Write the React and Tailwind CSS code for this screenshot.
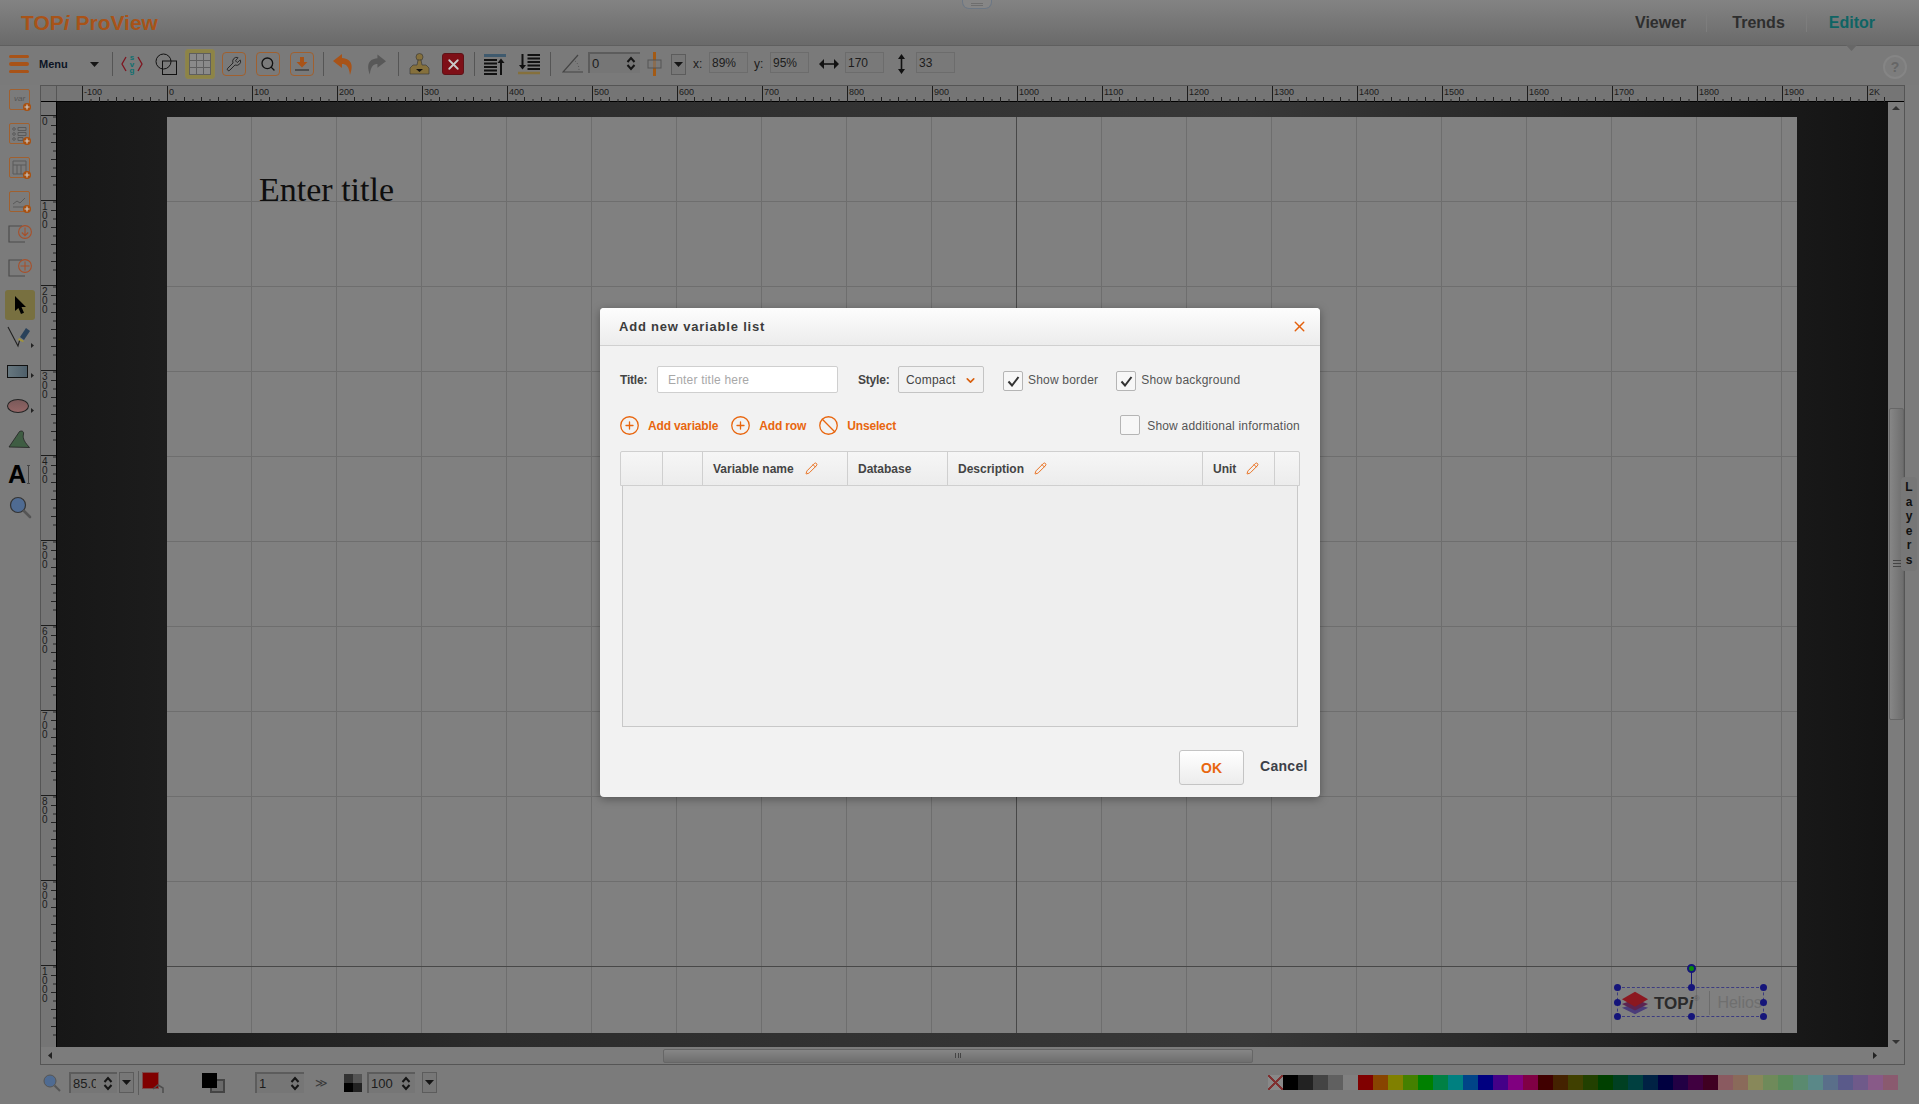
import { Ban, ChevronDown, CirclePlus, Pencil, Search, Wrench, X } from "lucide-react";

const SWATCHES = [
  "#000000", "#222222", "#444444", "#606060", "#808080",
  "#800000", "#884400", "#808000", "#448000", "#008000", "#008044", "#008080", "#004488", "#000080", "#440088", "#800080", "#800044",
  "#400000", "#442200", "#404000", "#224000", "#004000", "#004022", "#004040", "#002244", "#000040", "#220044", "#400040", "#400022",
  "#8a5a60", "#8a6a5a", "#88885a", "#6f8a5a", "#5a8a5a", "#5a8a6f", "#5a8888", "#5a6f8a", "#5a5a8a", "#6f5a8a", "#885a88", "#8a5a6f",
];

const HEAD_COLS = [
  { w: "w-[42px]" },
  { w: "w-[40px]" },
  { w: "w-[145px]", label: "Variable name", pen: "ml-[11px]" },
  { w: "w-[100px]", label: "Database" },
  { w: "w-[255px]", label: "Description", pen: "ml-[10px]" },
  { w: "w-[72px]", label: "Unit", pen: "ml-[10px]" },
];

function Divider({ className }) {
  return <div className={`h-[24px] w-px bg-[#555] ${className}`} />;
}

function Spinner({ value, className }) {
  return (
    <div className={`flex h-[21px] items-center justify-between border-l-2 border-t-2 border-[#5c5c5c] bg-[#767676] pl-[2px] pr-[4px] text-[13px] text-[#1c1c1c] ${className}`}>
      <span className="w-[23px] overflow-hidden whitespace-nowrap">{value}</span>
      <svg width="10" height="15" viewBox="0 0 10 15" fill="none" stroke="#151515" strokeWidth="2">
        <path d="M1.5 6 5 2l3.5 4M1.5 9 5 13l3.5-4" />
      </svg>
    </div>
  );
}

function DropButton({ className }) {
  return (
    <div className={`flex h-[21px] w-[15px] items-center justify-center border border-[#5c5c5c] bg-[#777] ${className}`}>
      <svg width="9" height="5" viewBox="0 0 9 5"><path d="M0 0h9L4.5 5z" fill="#151515" /></svg>
    </div>
  );
}

function ValueBox({ value, className }) {
  return (
    <div className={`-mt-[3px] flex h-[21px] w-[39px] items-center border border-[#6c6c6c] bg-[#797979] pl-[2px] text-[12px] text-[#1c1c1c] ${className}`}>
      {value}
    </div>
  );
}

function OutlineButton({ children, className }) {
  return (
    <div className={`flex h-[24px] w-[24px] items-center justify-center rounded-[4px] border border-[#a0602f] ${className}`}>
      {children}
    </div>
  );
}

function AddBadge() {
  return (
    <span className="absolute -bottom-[2px] -right-[2px] flex h-[8px] w-[8px] items-center justify-center rounded-full bg-[#a9500f]">
      <svg width="6" height="6" viewBox="0 0 6 6" stroke="#c9c9c9" strokeWidth="1.2"><path d="M3 0.5v5M0.5 3h5" /></svg>
    </span>
  );
}

function VarTool({ className, children }) {
  return (
    <div className={`relative h-[21px] w-[21px] shrink-0 rounded-[2px] border border-[#a0602f] ${className}`}>
      {children}
      <AddBadge />
    </div>
  );
}

function FolderTool({ className, plus }) {
  return (
    <svg className={className} width="24" height="20" viewBox="0 0 24 20" fill="none">
      <path d="M14 2H1v16h16" stroke="#4d4d4d" strokeWidth="1.2" />
      <circle cx="17" cy="8" r="6.4" stroke="#a8502a" strokeWidth="1.1" fill="#7b7b7b" />
      {plus ? (
        <path d="M17 3.5v9M12.5 8h9" stroke="#a8502a" strokeWidth="1.1" />
      ) : (
        <path d="M17 3.5v8M13.8 8.5l3.2 3.2 3.2-3.2" stroke="#a8502a" strokeWidth="1.1" />
      )}
    </svg>
  );
}

function MoreMark() {
  return <svg className="absolute -right-[1px] bottom-0" width="3" height="5" viewBox="0 0 3 5"><path d="M0 0l3 2.5L0 5z" fill="#222" /></svg>;
}

function LeftTools() {
  return (
    <div className="flex w-[40px] shrink-0 flex-col items-center pt-[4px]">
      <VarTool className="-ml-[1px]">
        <span className="block text-center text-[8px] italic leading-[17px] text-[#555]">var</span>
      </VarTool>
      <VarTool className="-ml-[1px] mt-[13px]">
        <svg width="19" height="19" viewBox="0 0 19 19" fill="none" stroke="#5a5a5a"><path d="M8 3.5h8v3H8zM8 8.5h8v3H8zM8 13.5h5v3H8z" /><circle cx="4" cy="5" r="1.3" /><circle cx="4" cy="10" r="1.3" /><circle cx="4" cy="15" r="1.3" /></svg>
      </VarTool>
      <VarTool className="-ml-[1px] mt-[13px]">
        <svg width="19" height="19" viewBox="0 0 19 19" fill="none" stroke="#5a5a5a"><path d="M3 3h13v13H3zM3 7h13M7 7v9M11 7v9" /></svg>
      </VarTool>
      <VarTool className="-ml-[1px] mt-[13px]">
        <svg width="19" height="19" viewBox="0 0 19 19" fill="none" strokeWidth="1"><path d="M3 12l4-3 3 2 5-5" stroke="#5a5a5a" /><path d="M3 15h13" stroke="#5a5a5a" /></svg>
      </VarTool>
      <FolderTool className="mt-[12px]" />
      <FolderTool className="mt-[14px]" plus />
      <div className="mt-[12px] flex h-[30px] w-[30px] shrink-0 items-center justify-center rounded-[3px] bg-[#787040]">
        <svg width="13" height="21" viewBox="0 0 13 21"><path d="M1 1v15l3.4-3 2.6 6 3-1.3-2.5-5.7H12z" fill="#000" /></svg>
      </div>
      <div className="relative mt-[5px] h-[23px] w-[26px] shrink-0">
        <svg width="24" height="23" viewBox="0 0 24 23" fill="none">
          <path d="M1 2l10 19L13 14" stroke="#222" strokeWidth="1.1" />
          <path d="M13 12l6-9 4 3-6 9z" fill="#29415a" />
          <path d="M12 13l5 3-1 1-5-2z" fill="#a39538" />
        </svg>
        <MoreMark />
      </div>
      <div className="relative mt-[17px] flex h-[13px] w-[26px] shrink-0">
        <div className="h-[13px] w-[21px] border border-[#111] bg-[linear-gradient(to_right,#67777f,#4e5f6a)]" />
        <MoreMark />
      </div>
      <div className="relative mt-[21px] h-[14px] w-[26px] shrink-0">
        <div className="h-[14px] w-[22px] rounded-[50%] border border-[#222] bg-[linear-gradient(to_bottom,#7a5a5a,#946666)]" />
        <MoreMark />
      </div>
      <svg className="mt-[17px] shrink-0" width="24" height="18" viewBox="0 0 24 18">
        <path d="M1 17 11.5 1.5c2-1 4.500-.5 4 2.500s-1 6 6 13.500z" fill="#3f5d43" stroke="#222" strokeWidth=".8" />
      </svg>
      <div className="mt-[16px] flex h-[20px] w-[24px] shrink-0 items-center">
        <span className="text-[25px] font-bold leading-[20px] text-black">A</span>
        <span className="ml-[1px] h-[19px] w-[3px] border-x-0 border-y border-[#444] bg-[linear-gradient(to_right,transparent_1px,#444_1px,#444_2px,transparent_2px)]" />
      </div>
      <svg className="mt-[12px] shrink-0" width="23" height="23" viewBox="0 0 23 23" fill="none">
        <circle cx="9" cy="9" r="7.5" fill="#4f6b92" stroke="#333" strokeWidth="1.2" />
        <path d="M15 15l6 6" stroke="#555" strokeWidth="2.6" strokeLinecap="round" />
      </svg>
    </div>
  );
}

function Header() {
  return (
    <header className="relative flex h-[46px] shrink-0 items-center border-b border-[#5f5f5f] bg-[linear-gradient(to_bottom,#838383,#6a6a6a)] pl-[21px]">
      <div className="text-[21px] font-bold leading-none text-[#a85318]">
        TOP<i>i</i> ProView
      </div>
      <div className="absolute left-[962px] top-0 flex h-[9px] w-[30px] flex-col items-center gap-[1px] rounded-b-[7px] border border-t-0 border-[#6c7784] bg-[#868686] pt-[3px]">
        <span className="h-px w-[12px] bg-[#6e6e6e]" />
        <span className="h-px w-[12px] bg-[#6e6e6e]" />
      </div>
      <nav className="ml-auto flex h-[20px] items-center pr-[44px] text-[16px] font-bold">
        <span className="text-[#2e2e2e]">Viewer</span>
        <span className="ml-[20px] h-[18px] w-px bg-[#7d7d7d]" />
        <span className="ml-[25px] text-[#2e2e2e]">Trends</span>
        <span className="ml-[21px] h-[18px] w-px bg-[#7d7d7d]" />
        <span className="ml-[22px] text-[#0f6464]">Editor</span>
      </nav>
      <svg className="absolute left-[1846px] top-[45px] z-10" width="11" height="6" viewBox="0 0 11 6"><path d="M0 0h11L5.5 6z" fill="#676767" /></svg>
    </header>
  );
}

function Toolbar() {
  return (
    <div className="relative flex h-[39px] shrink-0 items-center bg-[#7a7a7a] pb-[3px] text-[#1a1a1a]">
      <div className="ml-[9px] flex w-[20px] flex-col gap-[4px]">
        <span className="h-[3.500px] rounded-full bg-[#a85318]" />
        <span className="h-[3.500px] rounded-full bg-[#a85318]" />
        <span className="h-[3.500px] rounded-full bg-[#a85318]" />
      </div>
      <span className="ml-[10px] w-[31px] text-[11px] font-bold text-[#0c1424]">Menu</span>
      <svg className="ml-[20px]" width="9" height="5" viewBox="0 0 9 5"><path d="M0 0h9L4.500 5z" fill="#151515" /></svg>
      <Divider className="ml-[13px]" />
      <svg className="ml-[8px]" width="22" height="22" viewBox="0 0 22 22" fill="none">
        <path d="M5 4 1 11l4 7M17 4l4 7-4 7" stroke="#7e1520" strokeWidth="1.3" />
        <text x="11" y="7" textAnchor="middle" fontSize="8" fontWeight="700" fill="#0f6f6f">s</text>
        <text x="11" y="14" textAnchor="middle" fontSize="8" fontWeight="700" fill="#0f6f6f">v</text>
        <text x="11" y="20" textAnchor="middle" fontSize="8" fontWeight="700" fill="#0f6f6f">g</text>
      </svg>
      <svg className="ml-[12px]" width="22" height="22" viewBox="0 0 22 22" fill="none" stroke="#111" strokeWidth="1">
        <circle cx="8.500" cy="8.500" r="7.500" />
        <rect x="7.500" y="8" width="14" height="13.500" />
      </svg>
      <div className="ml-[8px] flex h-[30px] w-[30px] items-center justify-center rounded-[3px] border border-[#8c8450] bg-[#8d8446]">
        <div className="grid h-[22px] w-[22px] grid-cols-3 gap-px bg-[#5e5e5e] p-px">
          {Array.from({ length: 9 }, (_, i) => (
            <span key={i} className="bg-[#8a8a8a]" />
          ))}
        </div>
      </div>
      <OutlineButton className="ml-[7px]"><Wrench size={16} strokeWidth={1.3} color="#1c1c1c" /></OutlineButton>
      <OutlineButton className="ml-[10px]"><Search size={16} strokeWidth={2} color="#111" /></OutlineButton>
      <OutlineButton className="ml-[10px]">
        <svg width="16" height="16" viewBox="0 0 16 16"><path d="M6 1h4v5h3.500L8 11.500 2.500 6H6z" fill="#a85318" /><path d="M1 14h14" stroke="#444" strokeWidth="1.600" /></svg>
      </OutlineButton>
      <Divider className="ml-[9px]" />
      <svg className="ml-[9px]" width="20" height="23" viewBox="0 0 20 23"><path d="M9 1 0 8l9 7v-4c4 0 7 2 8 11 3-8 3-16-8-17z" fill="#a85318" /></svg>
      <svg className="ml-[14px]" width="19" height="23" viewBox="0 0 20 23"><path d="M11 1l9 7-9 7v-4c-4 0-7 2-8 11-3-8-3-16 8-17z" fill="#585858" /></svg>
      <Divider className="ml-[12px]" />
      <svg className="ml-[10px]" width="21" height="22" viewBox="0 0 21 22">
        <circle cx="10.500" cy="4" r="3.500" fill="#85703c" stroke="#333" strokeWidth=".6" />
        <path d="M9 7h3l1 5h4l3 3v6H1v-6l3-3h4z" fill="#85703c" stroke="#333" strokeWidth=".6" />
        <path d="M7 16h7l-3.500 3z" fill="#111" />
      </svg>
      <div className="ml-[12px] flex h-[22px] w-[22px] items-center justify-center rounded-[3px] border border-[#5e1217] bg-[#7e0f17]">
        <X size={17} strokeWidth={2.600} color="#c9c9c9" />
      </div>
      <Divider className="ml-[10px]" />
      <svg className="ml-[9px]" width="22" height="21" viewBox="0 0 22 21" fill="none">
        <path d="M0 1.500h22" stroke="#3f5a6e" strokeWidth="3" /><path d="M0 6h13M0 9.500h13M0 13h13M0 16.500h13M0 20h13" stroke="#111" strokeWidth="1.800" /><path d="M17 21V8" stroke="#111" strokeWidth="2" /><path d="M13.500 9 17 4.500 20.500 9z" fill="#111" />
      </svg>
      <svg className="ml-[12px]" width="22" height="21" viewBox="0 0 22 21" fill="none">
        <path d="M9.500 1H22M9.500 4.500H22M9.500 8H22M9.500 11.500H22M9.500 15H22" stroke="#111" strokeWidth="1.800" /><path d="M4.500 0v12" stroke="#111" strokeWidth="2" /><path d="M1 11l3.500 4.500L8 11z" fill="#111" /><path d="M0 19h22" stroke="#85703c" strokeWidth="2.500" />
      </svg>
      <Divider className="ml-[10px]" />
      <svg className="ml-[11px]" width="21" height="20" viewBox="0 0 21 20" fill="none">
        <path d="M16 1 1 18h20" stroke="#444" strokeWidth="1.200" /><path d="M13 7c3 2 4 6 4 9" stroke="#555" strokeDasharray="1 2" />
      </svg>
      <Spinner value="0" className="-mt-[3px] ml-[5px] w-[52px]" />
      <svg className="ml-[7px]" width="15" height="24" viewBox="0 0 15 24" fill="none">
        <path d="M7.500 0v24" stroke="#a35a14" strokeWidth="3" /><rect x="1" y="8" width="13" height="8" fill="#7a7a7a" fillOpacity=".6" stroke="#555" />
      </svg>
      <DropButton className="ml-[9px]" />
      <span className="ml-[7px] w-[12px] text-[12px]">x:</span>
      <ValueBox value="89%" className="ml-[4px]" />
      <span className="ml-[6px] w-[12px] text-[12px]">y:</span>
      <ValueBox value="95%" className="ml-[4px]" />
      <svg className="ml-[10px]" width="20" height="10" viewBox="0 0 20 10"><path d="M2 5h16" stroke="#111" strokeWidth="1.600" /><path d="M5 0 0 5l5 5zM15 0l5 5-5 5z" fill="#111" /></svg>
      <ValueBox value="170" className="ml-[6px]" />
      <svg className="ml-[14px]" width="7" height="20" viewBox="0 0 7 20"><path d="M3.500 2v16" stroke="#111" strokeWidth="1.600" /><path d="M0 5l3.500-5L7 5zM0 15l3.500 5L7 15z" fill="#111" /></svg>
      <ValueBox value="33" className="ml-[11px]" />
      <div className="absolute left-[1883px] top-[9px] flex h-[24px] w-[24px] items-center justify-center rounded-full border-2 border-[#858585] bg-[#7d7d7d] text-[14px] font-bold text-[#666]">?</div>
    </div>
  );
}

function TopRuler() {
  const majors = Array.from({ length: 22 }, (_, i) => i);
  const ticks = Array.from({ length: 220 }, (_, i) => i);
  const labels = (i) => (i === 21 ? "2K" : String((i - 1) * 100));
  return (
    <svg className="block" width="1831" height="16" viewBox="0 0 1831 16">
      {ticks.map((i) =>
        i % 10 ? (
          <path key={i} d={`M${25.500 + i * 8.500} 16v-${i % 2 ? 3 : 5}`} stroke="#222" fill="none" />
        ) : null,
      )}
      {majors.map((i) => (
        <g key={i}>
          <path d={`M${25.500 + i * 85} 0v16`} stroke="#1c1c1c" fill="none" />
          <text x={27 + i * 85} y={9} fontSize="9" fill="#1c1c1c">{labels(i)}</text>
        </g>
      ))}
    </svg>
  );
}

function SideRuler() {
  const ticks = Array.from({ length: 120 }, (_, i) => i);
  const majors = Array.from({ length: 11 }, (_, i) => i);
  return (
    <svg className="block" width="15" height="945" viewBox="0 0 15 945">
      {ticks.map((i) =>
        i % 10 ? (
          <path key={i} d={`M15 ${6.500 + i * 8.500}h-${i % 2 ? 3 : 5}`} stroke="#222" fill="none" />
        ) : null,
      )}
      {majors.map((i) => (
        <g key={i}>
          <path d={`M0 ${13.500 + i * 85}h15`} stroke="#1c1c1c" fill="none" />
          {String(i * 100).split("").map((d, j) => (
            <text key={j} x={1} y={23 + i * 85 + j * 9} fontSize="10" fill="#1c1c1c">{d}</text>
          ))}
        </g>
      ))}
    </svg>
  );
}

function Handle({ className }) {
  return <span className={`absolute h-[7px] w-[7px] rounded-full bg-[#15157a] ${className}`} />;
}

function SelectedLogo() {
  return (
    <div className="absolute left-[1450px] top-[870px] h-[30px] w-[147px] border border-dashed border-[#3c3c80]">
      <div className="absolute left-[3px] top-[1px] flex h-[28px] items-center">
        <svg width="28" height="26" viewBox="0 0 30 26">
          <path d="M15 14 29 18 15 25 1 18z" fill="#4a3c7a" />
          <path d="M15 9 29 14 15 21 1 14z" fill="#5c2450" />
          <path d="M15 1 29 9 15 17 1 9z" fill="#8c1820" />
        </svg>
        <span className="ml-[5px] text-[17px] font-bold leading-none text-[#2a2a2a]">TOP<i>i</i></span>
        <span className="w-[9px] self-start pt-[4px] text-[8px] text-[#5c5c5c]">®</span>
        <span className="ml-[7px] h-[24px] w-px bg-[#6c6c6c]" />
        <span className="ml-[7px] text-[16px] leading-none text-[#6f6f6f]">Helios</span>
      </div>
      <span className="absolute -top-[20px] left-[73px] h-[20px] w-px bg-[#15157a]" />
      <span className="absolute -top-[24px] left-[69px] h-[9px] w-[9px] rounded-full border-2 border-[#15157a] bg-[#0a8a0a]" />
      <Handle className="-left-[4px] -top-[4px]" />
      <Handle className="-top-[4px] left-[70px]" />
      <Handle className="-right-[4px] -top-[4px]" />
      <Handle className="-left-[4px] top-[11px]" />
      <Handle className="-right-[4px] top-[11px]" />
      <Handle className="-bottom-[4px] -left-[4px]" />
      <Handle className="-bottom-[4px] left-[70px]" />
      <Handle className="-bottom-[4px] -right-[4px]" />
    </div>
  );
}

function Workspace() {
  return (
    <div className="flex h-[980px] w-[1865px] shrink-0 flex-col border border-[#555]">
      <div className="flex h-[16px] shrink-0 border-b border-black bg-[#757575]">
        <div className="h-full w-[16px] shrink-0 border-r border-[#555]" />
        <TopRuler />
      </div>
      <div className="flex min-h-0 flex-1">
        <div className="w-[16px] shrink-0 border-r border-black bg-[#757575]">
          <SideRuler />
        </div>
        <div className="relative w-[1831px] shrink-0 bg-[linear-gradient(to_right,#171717,#2c2c2c_24%,#333333_46%,#383838_65%,#242424_84%,#131313)] pl-[110px] pt-[15px]">
          <div className="relative h-[916px] w-[1630px] bg-[#808080] bg-[linear-gradient(to_right,#6e6e6e_1px,transparent_1px),linear-gradient(to_bottom,#6e6e6e_1px,transparent_1px)] bg-[size:85px_85px] bg-[position:-1px_-1px]">
            <span className="absolute left-[849px] top-0 h-full w-px bg-[#484848]" />
            <span className="absolute left-0 top-[849px] h-px w-full bg-[#484848]" />
            <div className="absolute left-[92px] top-[53px] font-['Liberation_Serif',serif] text-[34px] leading-[40px] text-[#0e0e0e]">
              Enter title
            </div>
            <SelectedLogo />
          </div>
        </div>
        <div className="relative flex w-[16px] shrink-0 flex-col items-center bg-[#7c7c7c]">
          <svg className="mt-[4px]" width="8" height="4" viewBox="0 0 8 4"><path d="M4 0l4 4H0z" fill="#333" /></svg>
          <div className="relative mt-[298px] h-[312px] w-[15px] rounded-[2px] border border-[#666] bg-[linear-gradient(to_right,#868686,#6e6e6e)]">
            <div className="absolute bottom-[152px] left-[3px] flex w-[8px] flex-col gap-[2px]">
              <span className="h-px bg-[#444]" />
              <span className="h-px bg-[#444]" />
              <span className="h-px bg-[#444]" />
            </div>
          </div>
          <svg className="mt-auto mb-[3px]" width="8" height="4" viewBox="0 0 8 4"><path d="M4 4l4-4H0z" fill="#333" /></svg>
        </div>
      </div>
      <div className="relative flex h-[17px] shrink-0 items-center bg-[#7c7c7c] pl-[7px]">
        <svg width="4" height="7" viewBox="0 0 4 7"><path d="M0 3.500 4 0v7z" fill="#222" /></svg>
        <div className="ml-[611px] flex h-[14px] w-[590px] items-center justify-center rounded-[2px] border border-[#666] bg-[linear-gradient(to_bottom,#868686,#6e6e6e)]">
          <span className="h-[5px] w-[6px] border-x border-[#444] bg-[linear-gradient(to_right,transparent_2px,#444_2px,#444_3px,transparent_3px)]" />
        </div>
        <svg className="ml-[620px]" width="4" height="7" viewBox="0 0 4 7"><path d="M4 3.500 0 0v7z" fill="#222" /></svg>
      </div>
    </div>
  );
}

function BottomBar() {
  return (
    <div className="flex h-[39px] shrink-0 items-center bg-[#7b7b7b] pb-[4px] text-[#1a1a1a]">
      <svg className="ml-[43px]" width="18" height="18" viewBox="0 0 18 18" fill="none">
        <circle cx="7" cy="7" r="6" fill="#4f6b92" stroke="#555" />
        <path d="M11.500 11.500 17 17" stroke="#555" strokeWidth="2" />
      </svg>
      <Spinner value="85.0" className="ml-[8px] w-[48px]" />
      <DropButton className="ml-[2px]" />
      <span className="ml-[4px] h-[24px] w-px bg-[#5c5c5c]" />
      <div className="relative ml-[4px] h-[20px] w-[22px]">
        <span className="absolute left-0 top-0 h-[15px] w-[15px] bg-[#800000] outline outline-[#7a4a4a]" />
        <svg className="absolute bottom-0 right-0" width="13" height="9" viewBox="0 0 13 9" fill="none" stroke="#4e4e4e" strokeWidth="1.500"><path d="M1 5l5-4 5 3v5" /></svg>
      </div>
      <div className="relative ml-[37px] h-[20px] w-[23px]">
        <span className="absolute bottom-0 right-0 h-[14px] w-[15px] border-2 border-[#444] bg-[#6a6a6a]" />
        <span className="absolute left-0 top-0 h-[15px] w-[15px] bg-black" />
      </div>
      <Spinner value="1" className="ml-[30px] w-[49px]" />
      <span className="ml-[11px] w-[13px] text-[12px] leading-none tracking-[-1px] text-[#3a3a3a]">≫</span>
      <span className="ml-[16px] h-[18px] w-[18px] bg-[conic-gradient(#555_0_25%,#222_25%_50%,#000_50%_75%,#333_75%)]" />
      <Spinner value="100" className="ml-[5px] w-[48px]" />
      <DropButton className="ml-[7px]" />
      <div className="ml-auto mr-[21px] flex h-[15px]">
        <div className="h-[15px] w-[15px] bg-[#888] bg-[linear-gradient(45deg,transparent_46%,#803030_46%,#803030_54%,transparent_54%),linear-gradient(-45deg,transparent_46%,#803030_46%,#803030_54%,transparent_54%)]" />
        {SWATCHES.map((c, i) => (
          <span key={i} className="h-[15px] w-[15px]" style={{ backgroundColor: c }} />
        ))}
      </div>
    </div>
  );
}

function Check({ checked, className }) {
  return (
    <span className={`flex h-[20px] w-[20px] shrink-0 items-center justify-center rounded-[2px] border border-[#b5b5b5] bg-[#f7f7f7] ${className}`}>
      {checked && (
        <svg width="13" height="11" viewBox="0 0 13 11" fill="none"><path d="M1.500 5.500 5 9.500 11.500 1" stroke="#333" strokeWidth="2" /></svg>
      )}
    </span>
  );
}

function ModalAction({ icon: Icon, label, className }) {
  return (
    <div className={`flex items-center ${className}`}>
      <Icon size={21} strokeWidth={1.500} color="#e8660f" />
      <span className="ml-[8px] mt-[1px] text-[12px] font-bold tracking-[-0.150px] text-[#e8660f]">{label}</span>
    </div>
  );
}

function AddListDialog() {
  return (
    <div className="absolute left-[600px] top-[308px] flex h-[489px] w-[720px] flex-col rounded-[4px] bg-[#f2f2f2] font-['Liberation_Sans',sans-serif] shadow-[0_2px_10px_rgba(0,0,0,0.35)]">
      <div className="flex h-[38px] shrink-0 items-center justify-between rounded-t-[4px] border-b border-[#d0d0d0] bg-[linear-gradient(to_bottom,#fdfdfd,#ececec)] pl-[19px] pr-[12px]">
        <span className="text-[13px] font-bold tracking-[0.800px] text-[#3c3c3c]">Add new variable list</span>
        <X size={17} strokeWidth={2} color="#e4600c" />
      </div>
      <div className="ml-[20px] mt-[20px] flex h-[27px] shrink-0 items-center text-[12px] tracking-[0.200px]">
        <span className="w-[28px] font-bold tracking-[-0.200px] text-[#444]">Title:</span>
        <div className="ml-[9px] flex h-[27px] w-[181px] items-center rounded-[2px] border border-[#cfcfcf] bg-white pl-[10px] text-[#a8a8a8]">Enter title here</div>
        <span className="ml-[20px] w-[30px] font-bold tracking-[-0.200px] text-[#444]">Style:</span>
        <div className="ml-[10px] flex h-[27px] w-[86px] items-center justify-between rounded-[2px] border border-[#c4c4c4] bg-[#f2f2f2] pl-[7px] pr-[6px] text-[#444]">
          Compact
          <ChevronDown size={13} strokeWidth={3} color="#d9600f" className="mt-[2px]" />
        </div>
        <Check checked className="ml-[19px] mt-[3px]" />
        <span className="ml-[5px] mt-[1px] text-[#555]">Show border</span>
        <Check checked className="ml-[18px] mt-[3px]" />
        <span className="ml-[5px] mt-[1px] text-[#555]">Show background</span>
      </div>
      <div className="ml-[19px] mt-[22px] flex h-[20px] w-[681px] shrink-0 items-center">
        <ModalAction icon={CirclePlus} label="Add variable" />
        <ModalAction icon={CirclePlus} label="Add row" className="ml-[12px]" />
        <ModalAction icon={Ban} label="Unselect" className="ml-[12px]" />
        <Check className="ml-auto mr-[7px]" />
        <span className="mt-[1px] text-[12px] tracking-[0.200px] text-[#555]">Show additional information</span>
      </div>
      <div className="ml-[20px] mt-[16px] flex h-[35px] w-[680px] shrink-0 rounded-t-[2px] border border-[#cfcfcf] bg-[linear-gradient(to_bottom,#f6f6f6,#ececec)] text-[12px] font-bold text-[#444]">
        {HEAD_COLS.map((col, i) => (
          <div key={i} className={`flex shrink-0 items-center border-r border-[#cfcfcf] pl-[10px] ${col.w}`}>
            {col.label}
            {col.pen && <Pencil size={13} strokeWidth={1.700} color="#e8660f" className={col.pen} />}
          </div>
        ))}
      </div>
      <div className="ml-[22px] h-[241px] w-[676px] shrink-0 border border-t-0 border-[#c8c8c8] bg-[#eeeeee]" />
      <div className="mt-[23px] flex h-[35px] shrink-0 items-center">
        <div className="ml-[579px] flex h-[35px] w-[65px] items-center justify-center rounded-[3px] border border-[#c4c4c4] bg-[linear-gradient(to_bottom,#ffffff,#ececec)] pt-[2px] text-[14px] font-bold text-[#e8660f]">
          OK
        </div>
        <span className="ml-[16px] -mt-[2px] text-[14px] font-bold tracking-[0.300px] text-[#3c4048]">Cancel</span>
      </div>
    </div>
  );
}

export default function App() {
  return (
    <div className="relative flex h-[1104px] w-[1919px] flex-col overflow-hidden bg-[#7b7b7b] font-['Liberation_Sans',sans-serif]">
      <Header />
      <Toolbar />
      <div className="flex h-[980px] shrink-0">
        <LeftTools />
        <Workspace />
        <div className="relative flex-1">
          <div className="absolute -left-[4px] top-[392px] flex h-[94px] w-[16px] flex-col items-center rounded-[4px] bg-[#777] pt-[3px] text-[12px] font-bold leading-[14.500px] text-[#111]">
            {"Layers".split("").map((c, i) => (
              <span key={i}>{c}</span>
            ))}
          </div>
        </div>
      </div>
      <BottomBar />
      <AddListDialog />
    </div>
  );
}
